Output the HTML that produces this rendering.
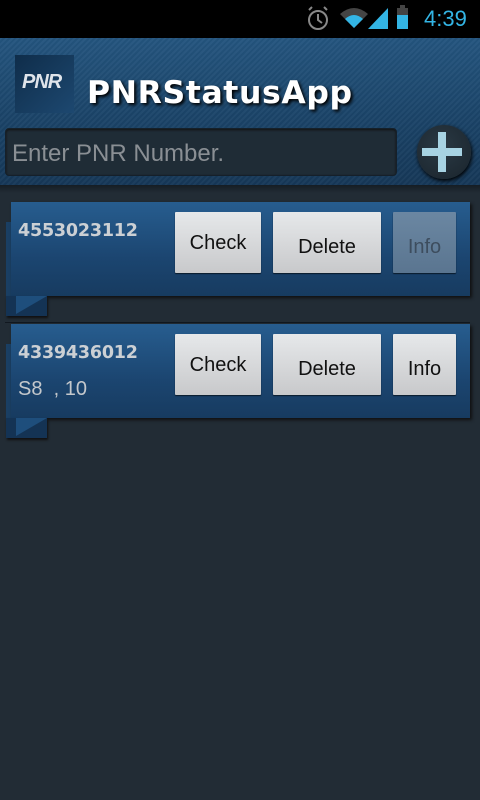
<!DOCTYPE html>
<html><head><meta charset="utf-8"><style>
*{margin:0;padding:0;box-sizing:border-box}
body{width:480px;height:800px;background:#222c35;font-family:"Liberation Sans",sans-serif;position:relative;overflow:hidden}
.sb{position:absolute;left:0;top:0;width:480px;height:38px;background:#000}
.time{position:absolute;left:424px;top:6px;color:#33b5e5;font-size:22px}
.hdr{position:absolute;left:0;top:38px;width:480px;height:147px;background-image:repeating-linear-gradient(135deg,rgba(255,255,255,0.03) 0 2px,rgba(0,0,0,0.03) 2px 4px),linear-gradient(#24557f,#1a4266 60%,#163858)}
.logo{position:absolute;left:15px;top:55px;width:59px;height:58px;background:linear-gradient(135deg,#0f2d4a,#1d4870);}
.logo span{position:absolute;left:7px;top:16px;color:#dfe4ea;font-style:italic;font-weight:bold;font-size:20px;letter-spacing:-1px}
.title{position:absolute;left:87px;top:75px;color:#fff;font-family:"DejaVu Sans",sans-serif;font-weight:bold;font-size:31.5px;letter-spacing:0.6px;text-shadow:2px 2px 3px #000}
.inp{position:absolute;left:5px;top:128px;width:392px;height:48px;background:#1f2c36;border:1px solid #15202a;border-radius:4px;box-shadow:inset 0 1px 2px #111;color:#8a8f94;font-size:24px;padding:11px 0 0 6px}
.plus{position:absolute;left:417px;top:125px;width:54px;height:54px;border-radius:50%;background:radial-gradient(circle at 45% 40%,#2a3944,#1a242c);box-shadow:1px 2px 4px #000}
.plus:before{content:"";position:absolute;left:5px;top:23px;width:40px;height:8px;background:#a7d3e3}
.plus:after{content:"";position:absolute;left:21px;top:7px;width:8px;height:40px;background:#a7d3e3}
.shadow{position:absolute;left:0;top:185px;width:480px;height:8px;background:linear-gradient(#151d24,#222c35)}
.card{position:absolute;left:11px;width:459px;height:94px;background:linear-gradient(#275d8f,#1b4570 60%,#173b60);box-shadow:2px 2px 3px #111}
.strip{position:absolute;left:6px;width:6px;background:#1a3f63}
.tab{position:absolute;left:6px;width:41px;height:20px;background:#143354;box-shadow:1px 2px 2px #111}
.tab:after{content:"";position:absolute;left:10px;top:0;width:0;height:0;border-right:31px solid #1e4e7c;border-bottom:18px solid transparent;transform:scaleX(-1);}
.num{position:absolute;left:18px;color:#ccd0d4;font-family:"DejaVu Sans",sans-serif;font-weight:bold;font-size:17.5px;letter-spacing:-0.2px}
.sub{position:absolute;left:18px;color:#c4c8cc;font-size:20px}
.btn{position:absolute;height:61px;background:linear-gradient(#e6e8ea,#c8c9cb);color:#111;font-size:20px;text-align:center;box-shadow:0 1px 1px #0a1a2a;border-radius:1px}
.btn.dis{background:linear-gradient(#6b87a2,#5a7590);color:#3d4d5e}
.line{position:absolute;left:5px;top:322px;width:465px;height:1px;background:#111820}
</style></head><body>
<div class="sb">
<svg width="480" height="38" style="position:absolute;left:0;top:0">
<circle cx="318" cy="20" r="9" fill="none" stroke="#888" stroke-width="2"/><path d="M318 14v6l4 3" stroke="#888" stroke-width="2" fill="none"/><path d="M309 10l3-3M327 10l-3-3" stroke="#888" stroke-width="2"/>
<path d="M340 14 Q354 2 368 14 L354 28Z" fill="#444"/><path d="M345 19 Q354 11 363 19 L354 28Z" fill="#33b5e5"/>
<path d="M368 29 L388 8 L388 29Z" fill="#33b5e5"/>
<rect x="397" y="8" width="11" height="21" fill="#444"/><rect x="397" y="15" width="11" height="14" fill="#33b5e5"/><rect x="400" y="5" width="5" height="3" fill="#444"/>
</svg>
<div class="time">4:39</div></div>
<div class="hdr"></div>
<div class="logo"><span>PNR</span></div>
<div class="title">PNRStatusApp</div>
<div class="inp">Enter PNR Number.</div>
<div class="plus"></div>
<div class="shadow"></div>

<div class="strip" style="top:222px;height:74px"></div>
<div class="card" style="top:202px"></div>
<div class="tab" style="top:296px"></div>
<div class="num" style="top:221px">4553023112</div>
<div class="btn" style="left:175px;top:212px;width:86px;padding-top:20px">Check</div>
<div class="btn" style="left:273px;top:212px;width:108px;padding-top:24px">Delete</div>
<div class="btn dis" style="left:393px;top:212px;width:63px;padding-top:24px">Info</div>

<div class="line"></div>
<div class="strip" style="top:344px;height:74px"></div>
<div class="card" style="top:324px"></div>
<div class="tab" style="top:418px"></div>
<div class="num" style="top:343px">4339436012</div>
<div class="sub" style="top:378px">S8 &nbsp;, 10</div>
<div class="btn" style="left:175px;top:334px;width:86px;padding-top:20px">Check</div>
<div class="btn" style="left:273px;top:334px;width:108px;padding-top:24px">Delete</div>
<div class="btn" style="left:393px;top:334px;width:63px;padding-top:24px">Info</div>
</body></html>
